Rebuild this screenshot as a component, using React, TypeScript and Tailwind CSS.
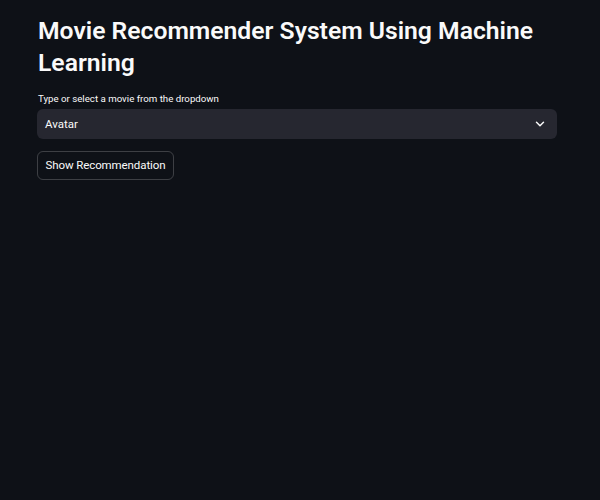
import { ChevronDown } from "lucide-react";

export default function App() {
  return (
    <div
      className="min-h-[500px] w-full bg-[#0e1117] text-[#fafafa]"
      style={{ fontFamily: 'Roboto, "Noto Sans", sans-serif' }}
    >
      <div className="flex flex-col px-[37px] pt-[15px]">
        <h1 className="pl-px text-[24.7px] font-semibold leading-[32px]">
          Movie Recommender System Using Machine Learning
        </h1>

        <label className="mt-[13px] pl-px text-[9.7px] leading-[14px] text-[#fafafa]">
          Type or select a movie from the dropdown
        </label>

        <div className="mt-[3px] flex h-[30px] w-[520px] items-center justify-between rounded-[6px] bg-[#262730] pl-[8px] pr-[10px]">
          <span className="pt-px text-[11.5px]">Avatar</span>
          <ChevronDown size={14} strokeWidth={2.5} />
        </div>

        <div className="mt-[12px]">
          <button className="h-[29px] w-[137px] rounded-[6px] border border-[#fafafa]/20 text-[11.5px] tracking-[-0.1px]">
            Show Recommendation
          </button>
        </div>
      </div>
    </div>
  );
}
